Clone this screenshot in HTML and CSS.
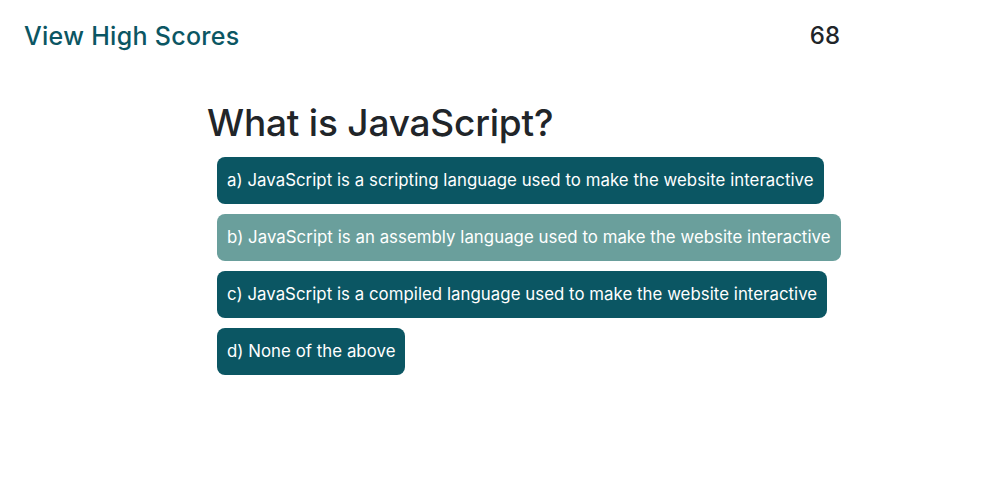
FILE: index.html
```html
<!DOCTYPE html>
<html>
<head>
<meta charset="utf-8">
<link rel="stylesheet" href="styles.css">
</head>
<body>
<header class="topbar">
  <a class="scores-link" href="#">View High Scores</a>
  <span class="timer">68</span>
</header>
<main class="quiz">
  <h1 class="question">What is JavaScript?</h1>
  <div class="choices">
    <button class="choice">a) JavaScript is a scripting language used to make the website interactive</button>
    <button class="choice choice-hover">b) JavaScript is an assembly language used to make the website interactive</button>
    <button class="choice">c) JavaScript is a compiled language used to make the website interactive</button>
    <button class="choice">d) None of the above</button>
  </div>
</main>
</body>
</html>
```
FILE: styles.css
```css
* { box-sizing: border-box; }
body {
  margin: 0;
  font-family: Inter, "Noto Sans", sans-serif;
  color: #212529;
  background: #fff;
}
.topbar {
  display: flex;
  align-items: center;
  justify-content: space-between;
  padding: 18px 143px 0 24px;
  height: 54px;
}
.scores-link {
  color: #0b5663;
  text-decoration: none;
  font-size: 25px;
  letter-spacing: 0.3px;
  font-weight: 500;
  line-height: 32px;
}
.timer {
  font-size: 24px;
  font-weight: 500;
  line-height: 32px;
}
.quiz {
  padding: 47px 0 0 207px;
}
.question {
  margin: 0 0 12px;
  font-size: 37px;
  letter-spacing: -0.2px;
  font-weight: 500;
  line-height: 44px;
}
.choices {
  display: flex;
  flex-direction: column;
  align-items: flex-start;
  gap: 10px;
  padding-left: 10px;
}
.choice {
  font-family: Inter, "Noto Sans", sans-serif;
  font-size: 16.8px;
  letter-spacing: 0.05px;
  line-height: 24px;
  color: #fff;
  background: #0b5663;
  border: none;
  border-radius: 8px;
  padding: 11px 10px 12px;
  height: 47px;
  text-align: left;
}
.choice-hover {
  background: #6a9f9c;
}
```
